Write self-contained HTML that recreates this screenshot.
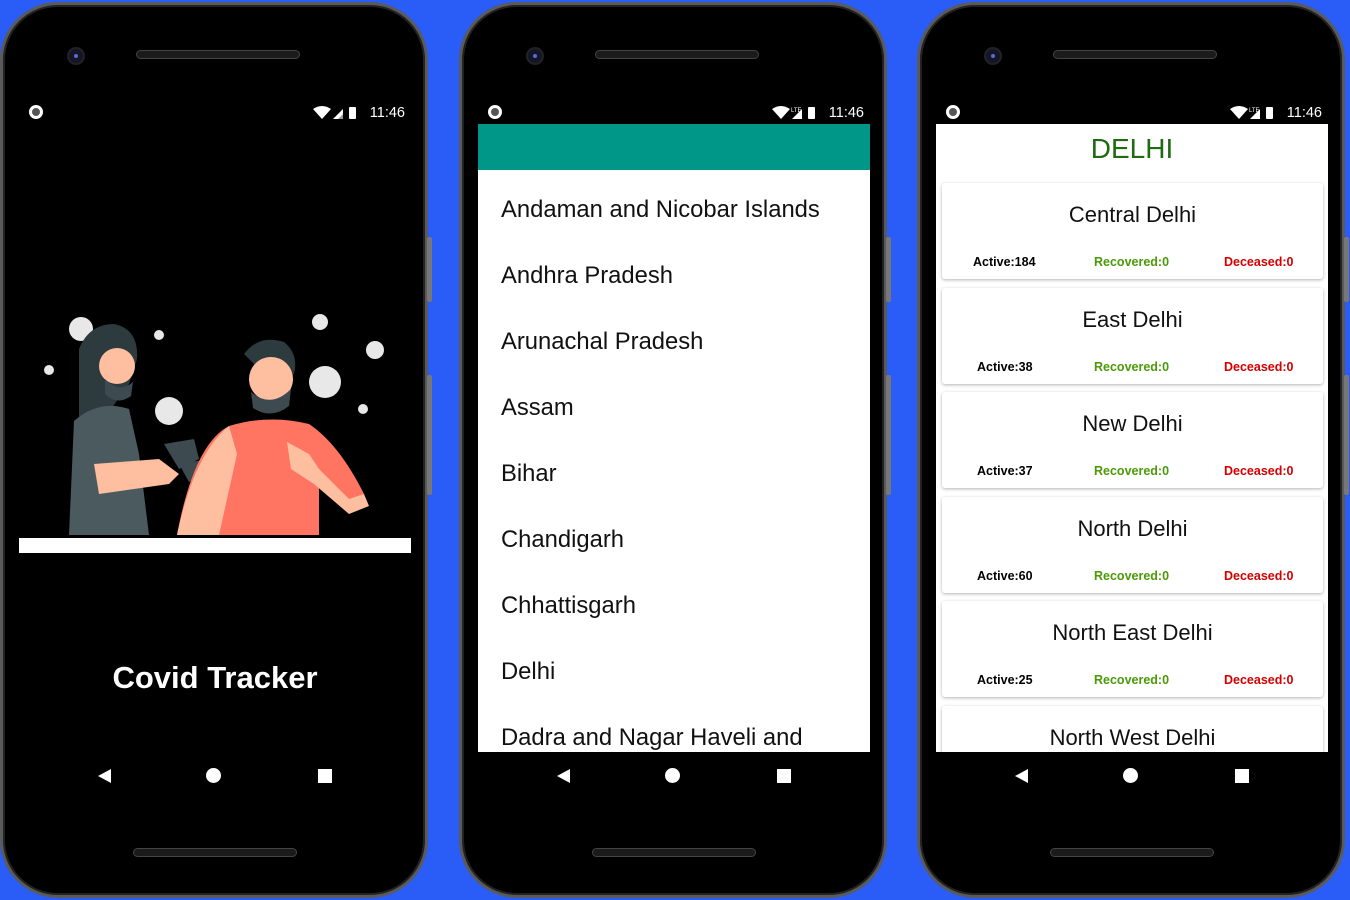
<!DOCTYPE html>
<html><head><meta charset="utf-8"><style>
*{margin:0;padding:0;box-sizing:border-box}
body{width:1350px;height:900px;background:#2a5df8;position:relative;overflow:hidden;font-family:"Liberation Sans",Roboto,sans-serif}
.phone{position:absolute;top:2px;width:428px;height:896px;border-radius:58px;background:#000;border:3px solid #5a5a5a;box-shadow:inset 0 0 0 2px #222}
.phone .btn{position:absolute;right:-7px;width:5px;background:#777;border-radius:2px}
.spk{position:absolute;left:133px;width:164px;height:9px;border-radius:5px;background:#1b1b1b;border:1px solid #444}
.cam{position:absolute;left:64px;top:42px;width:18px;height:18px;border-radius:50%;background:#15152a;border:2px solid #222}
.cam:after{content:"";position:absolute;left:5px;top:5px;width:4px;height:4px;border-radius:50%;background:#5a6ad0}
.dot{position:absolute;left:26px;top:100px;width:14px;height:14px;border-radius:50%;border:3px solid #fff;background:#555}
.time{position:absolute;right:20px;top:100px;color:#fff;font-size:14.5px}
.icons{position:absolute;right:62px;top:101px}
.screen{position:absolute;left:16px;top:119px;width:392px;height:628px;overflow:hidden}
.nav{position:absolute;top:760px;left:0;width:100%;height:20px}
.back{position:absolute;left:95px;top:4px;width:0;height:0;border-top:7px solid transparent;border-bottom:7px solid transparent;border-right:13px solid #fff}
.home{position:absolute;left:203px;top:3px;width:15px;height:15px;border-radius:50%;background:#fff}
.rec{position:absolute;left:315px;top:4px;width:14px;height:14px;background:#fff}
.item{position:absolute;left:23px;font-size:23.8px;color:#111}
.card{position:absolute;left:6px;width:381px;height:96px;background:#fff;border-radius:3px;box-shadow:0 1px 3px rgba(0,0,0,.3)}
.card .t{position:absolute;top:19px;width:100%;text-align:center;font-size:22px;color:#111}
.card .s{position:absolute;top:72px;font-size:12.5px;font-weight:bold}
</style></head><body>

<!-- phone 1 -->
<div class="phone" style="left:0">
 <div class="btn" style="top:232px;height:65px"></div><div class="btn" style="top:370px;height:120px"></div>
 <div class="spk" style="top:45px"></div><div class="cam"></div>
 <div class="dot"></div>
 <div class="icons"><svg width="50" height="14"><path d="M0 3 Q9 -3 18 3 L9 13Z" fill="#fff"/><path d="M20 13 L30 3 L30 13Z" fill="#fff"/><path d="M25 13 L30 8 L30 13Z" fill="#999"/><rect x="36" y="1" width="7" height="12" rx="1" fill="#fff"/></svg></div>
 <div class="time">11:46</div>
 <div class="screen" style="background:#000">
  <svg width="392" height="628" viewBox="0 0 392 628">
   <g fill="#e8e8e8">
    <circle cx="62" cy="205" r="12"/><circle cx="140" cy="211" r="5"/><circle cx="30" cy="246" r="5"/><circle cx="301" cy="198" r="8"/>
    <circle cx="356" cy="226" r="9"/><circle cx="150" cy="287" r="14"/><circle cx="306" cy="258" r="16"/><circle cx="344" cy="285" r="5"/>
   </g>
   <path d="M60 225 Q70 200 95 200 Q120 205 118 235 L110 260 L60 330 Z" fill="#2d3a3e"/>
   <circle cx="98" cy="242" r="18" fill="#fdbfa0"/>
   <path d="M86 255 Q100 270 114 258 L112 272 Q98 282 86 270Z" fill="#3d4a4f"/>
   <path d="M55 297 Q80 275 110 285 L120 330 L130 411 L50 411 Z" fill="#4b5a5e"/>
   <path d="M75 340 L140 335 L160 350 L150 360 L80 370 Z" fill="#fdbfa0"/>
   <path d="M145 320 L175 315 L180 335 L160 345 Z M160 340 L190 335 L192 350 L170 358 Z" fill="#3d4a4f"/>
   <path d="M225 230 Q240 210 265 218 Q280 230 275 250 L250 255 Z" fill="#2d3a3e"/>
   <circle cx="252" cy="255" r="22" fill="#fdbfa0"/>
   <path d="M232 268 Q252 285 272 265 L270 282 Q252 296 234 284Z" fill="#3d4a4f"/>
   <path d="M158 411 Q175 320 210 302 Q250 290 290 300 Q320 320 345 370 L330 380 L300 350 L300 411 Z" fill="#ff7561"/>
   <path d="M158 411 Q175 330 210 302 L218 330 L200 411Z" fill="#fdbfa0"/>
   <path d="M268 318 L290 330 L300 345 L330 375 L345 370 L350 382 L330 390 L295 360 L272 345 Z" fill="#fdbfa0"/>
   <rect x="0" y="414" width="392" height="15" fill="#fff"/>
  </svg>
  <div style="position:absolute;top:536px;width:100%;text-align:center;color:#fff;font-weight:bold;font-size:31px">Covid Tracker</div>
 </div>
 <div class="nav"><div class="back"></div><div class="home"></div><div class="rec"></div></div>
 <div class="spk" style="top:843px;left:130px"></div>
</div>

<!-- phone 2 -->
<div class="phone" style="left:459px">
 <div class="btn" style="top:232px;height:65px"></div><div class="btn" style="top:370px;height:120px"></div>
 <div class="spk" style="top:45px"></div><div class="cam"></div>
 <div class="dot"></div>
 <div class="icons"><svg width="50" height="14"><path d="M0 3 Q9 -3 18 3 L9 13Z" fill="#fff"/><text x="19" y="6" font-size="6" fill="#fff">LTE</text><path d="M20 13 L30 3 L30 13Z" fill="#fff"/><rect x="36" y="1" width="7" height="12" rx="1" fill="#fff"/></svg></div>
 <div class="time">11:46</div>
 <div class="screen" style="background:#fff">
  <div style="position:absolute;left:0;top:0;width:100%;height:46px;background:#009688"></div>
  <div class="item" style="top:72px">Andaman and Nicobar Islands</div>
  <div class="item" style="top:138px">Andhra Pradesh</div>
  <div class="item" style="top:204px">Arunachal Pradesh</div>
  <div class="item" style="top:270px">Assam</div>
  <div class="item" style="top:336px">Bihar</div>
  <div class="item" style="top:402px">Chandigarh</div>
  <div class="item" style="top:468px">Chhattisgarh</div>
  <div class="item" style="top:534px">Delhi</div>
  <div class="item" style="top:600px">Dadra and Nagar Haveli and</div>
 </div>
 <div class="nav"><div class="back"></div><div class="home"></div><div class="rec"></div></div>
 <div class="spk" style="top:843px;left:130px"></div>
</div>

<!-- phone 3 -->
<div class="phone" style="left:917px">
 <div class="btn" style="top:232px;height:65px"></div><div class="btn" style="top:370px;height:120px"></div>
 <div class="spk" style="top:45px"></div><div class="cam"></div>
 <div class="dot"></div>
 <div class="icons"><svg width="50" height="14"><path d="M0 3 Q9 -3 18 3 L9 13Z" fill="#fff"/><text x="19" y="6" font-size="6" fill="#fff">LTE</text><path d="M20 13 L30 3 L30 13Z" fill="#fff"/><rect x="36" y="1" width="7" height="12" rx="1" fill="#fff"/></svg></div>
 <div class="time">11:46</div>
 <div class="screen" style="background:#fff">
  <div style="position:absolute;top:9px;width:100%;text-align:center;font-size:28px;color:#1f6a12">DELHI</div>
  <div class="card" style="top:59px"><div class="t">Central Delhi</div><div class="s" style="left:31px">Active:184</div><div class="s" style="left:152px;color:#4b9a08">Recovered:0</div><div class="s" style="left:282px;color:#d40000">Deceased:0</div></div>
  <div class="card" style="top:164px"><div class="t">East Delhi</div><div class="s" style="left:35px">Active:38</div><div class="s" style="left:152px;color:#4b9a08">Recovered:0</div><div class="s" style="left:282px;color:#d40000">Deceased:0</div></div>
  <div class="card" style="top:268px"><div class="t">New Delhi</div><div class="s" style="left:35px">Active:37</div><div class="s" style="left:152px;color:#4b9a08">Recovered:0</div><div class="s" style="left:282px;color:#d40000">Deceased:0</div></div>
  <div class="card" style="top:373px"><div class="t">North Delhi</div><div class="s" style="left:35px">Active:60</div><div class="s" style="left:152px;color:#4b9a08">Recovered:0</div><div class="s" style="left:282px;color:#d40000">Deceased:0</div></div>
  <div class="card" style="top:477px"><div class="t">North East Delhi</div><div class="s" style="left:35px">Active:25</div><div class="s" style="left:152px;color:#4b9a08">Recovered:0</div><div class="s" style="left:282px;color:#d40000">Deceased:0</div></div>
  <div class="card" style="top:582px"><div class="t">North West Delhi</div></div>
 </div>
 <div class="nav"><div class="back"></div><div class="home"></div><div class="rec"></div></div>
 <div class="spk" style="top:843px;left:130px"></div>
</div>
</body></html>
